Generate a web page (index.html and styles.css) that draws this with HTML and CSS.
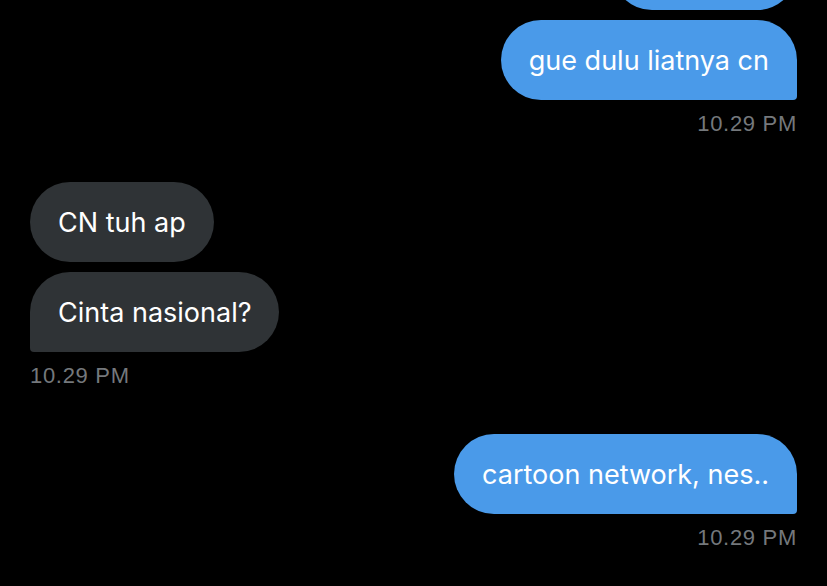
FILE: index.html
```html
<!DOCTYPE html>
<html lang="id">
<head>
<meta charset="utf-8">
<link rel="stylesheet" href="styles.css">
</head>
<body>
<div class="chat">
  <div class="bubble out partial"></div>
  <div class="bubble out last">gue dulu liatnya cn</div>
  <div class="time out-time">10.29 PM</div>

  <div class="bubble in">CN tuh ap</div>
  <div class="bubble in last">Cinta nasional?</div>
  <div class="time in-time">10.29 PM</div>

  <div class="bubble out last">cartoon network, nes..</div>
  <div class="time out-time">10.29 PM</div>
</div>
</body>
</html>
```
FILE: styles.css
```css
html, body {
  margin: 0;
  padding: 0;
  background: #000;
  overflow: hidden;
}
.chat {
  display: flex;
  flex-direction: column;
  padding: 0 30px;
  margin-top: -70px;
}
.bubble {
  box-sizing: border-box;
  height: 80px;
  border-radius: 40px;
  padding: 0 28px;
  display: flex;
  align-items: center;
  font-family: Inter, "Noto Sans", sans-serif;
  font-size: 27px;
  color: #fff;
  margin-bottom: 10px;
  white-space: nowrap;
}
.out {
  align-self: flex-end;
  background: #4a9ae9;
}
.in {
  align-self: flex-start;
  background: #2f3336;
}
.partial {
  width: 185px;
}
.out.last {
  border-bottom-right-radius: 4px;
  margin-bottom: 0;
}
.in.last {
  border-bottom-left-radius: 4px;
  margin-bottom: 0;
}
.time {
  font-family: "Liberation Sans", Arial, sans-serif;
  font-size: 22px;
  letter-spacing: 0.7px;
  line-height: 28px;
  color: #74787c;
  margin-top: 10px;
  margin-bottom: 44px;
}
.out-time {
  align-self: flex-end;
}
.in-time {
  align-self: flex-start;
}
```
